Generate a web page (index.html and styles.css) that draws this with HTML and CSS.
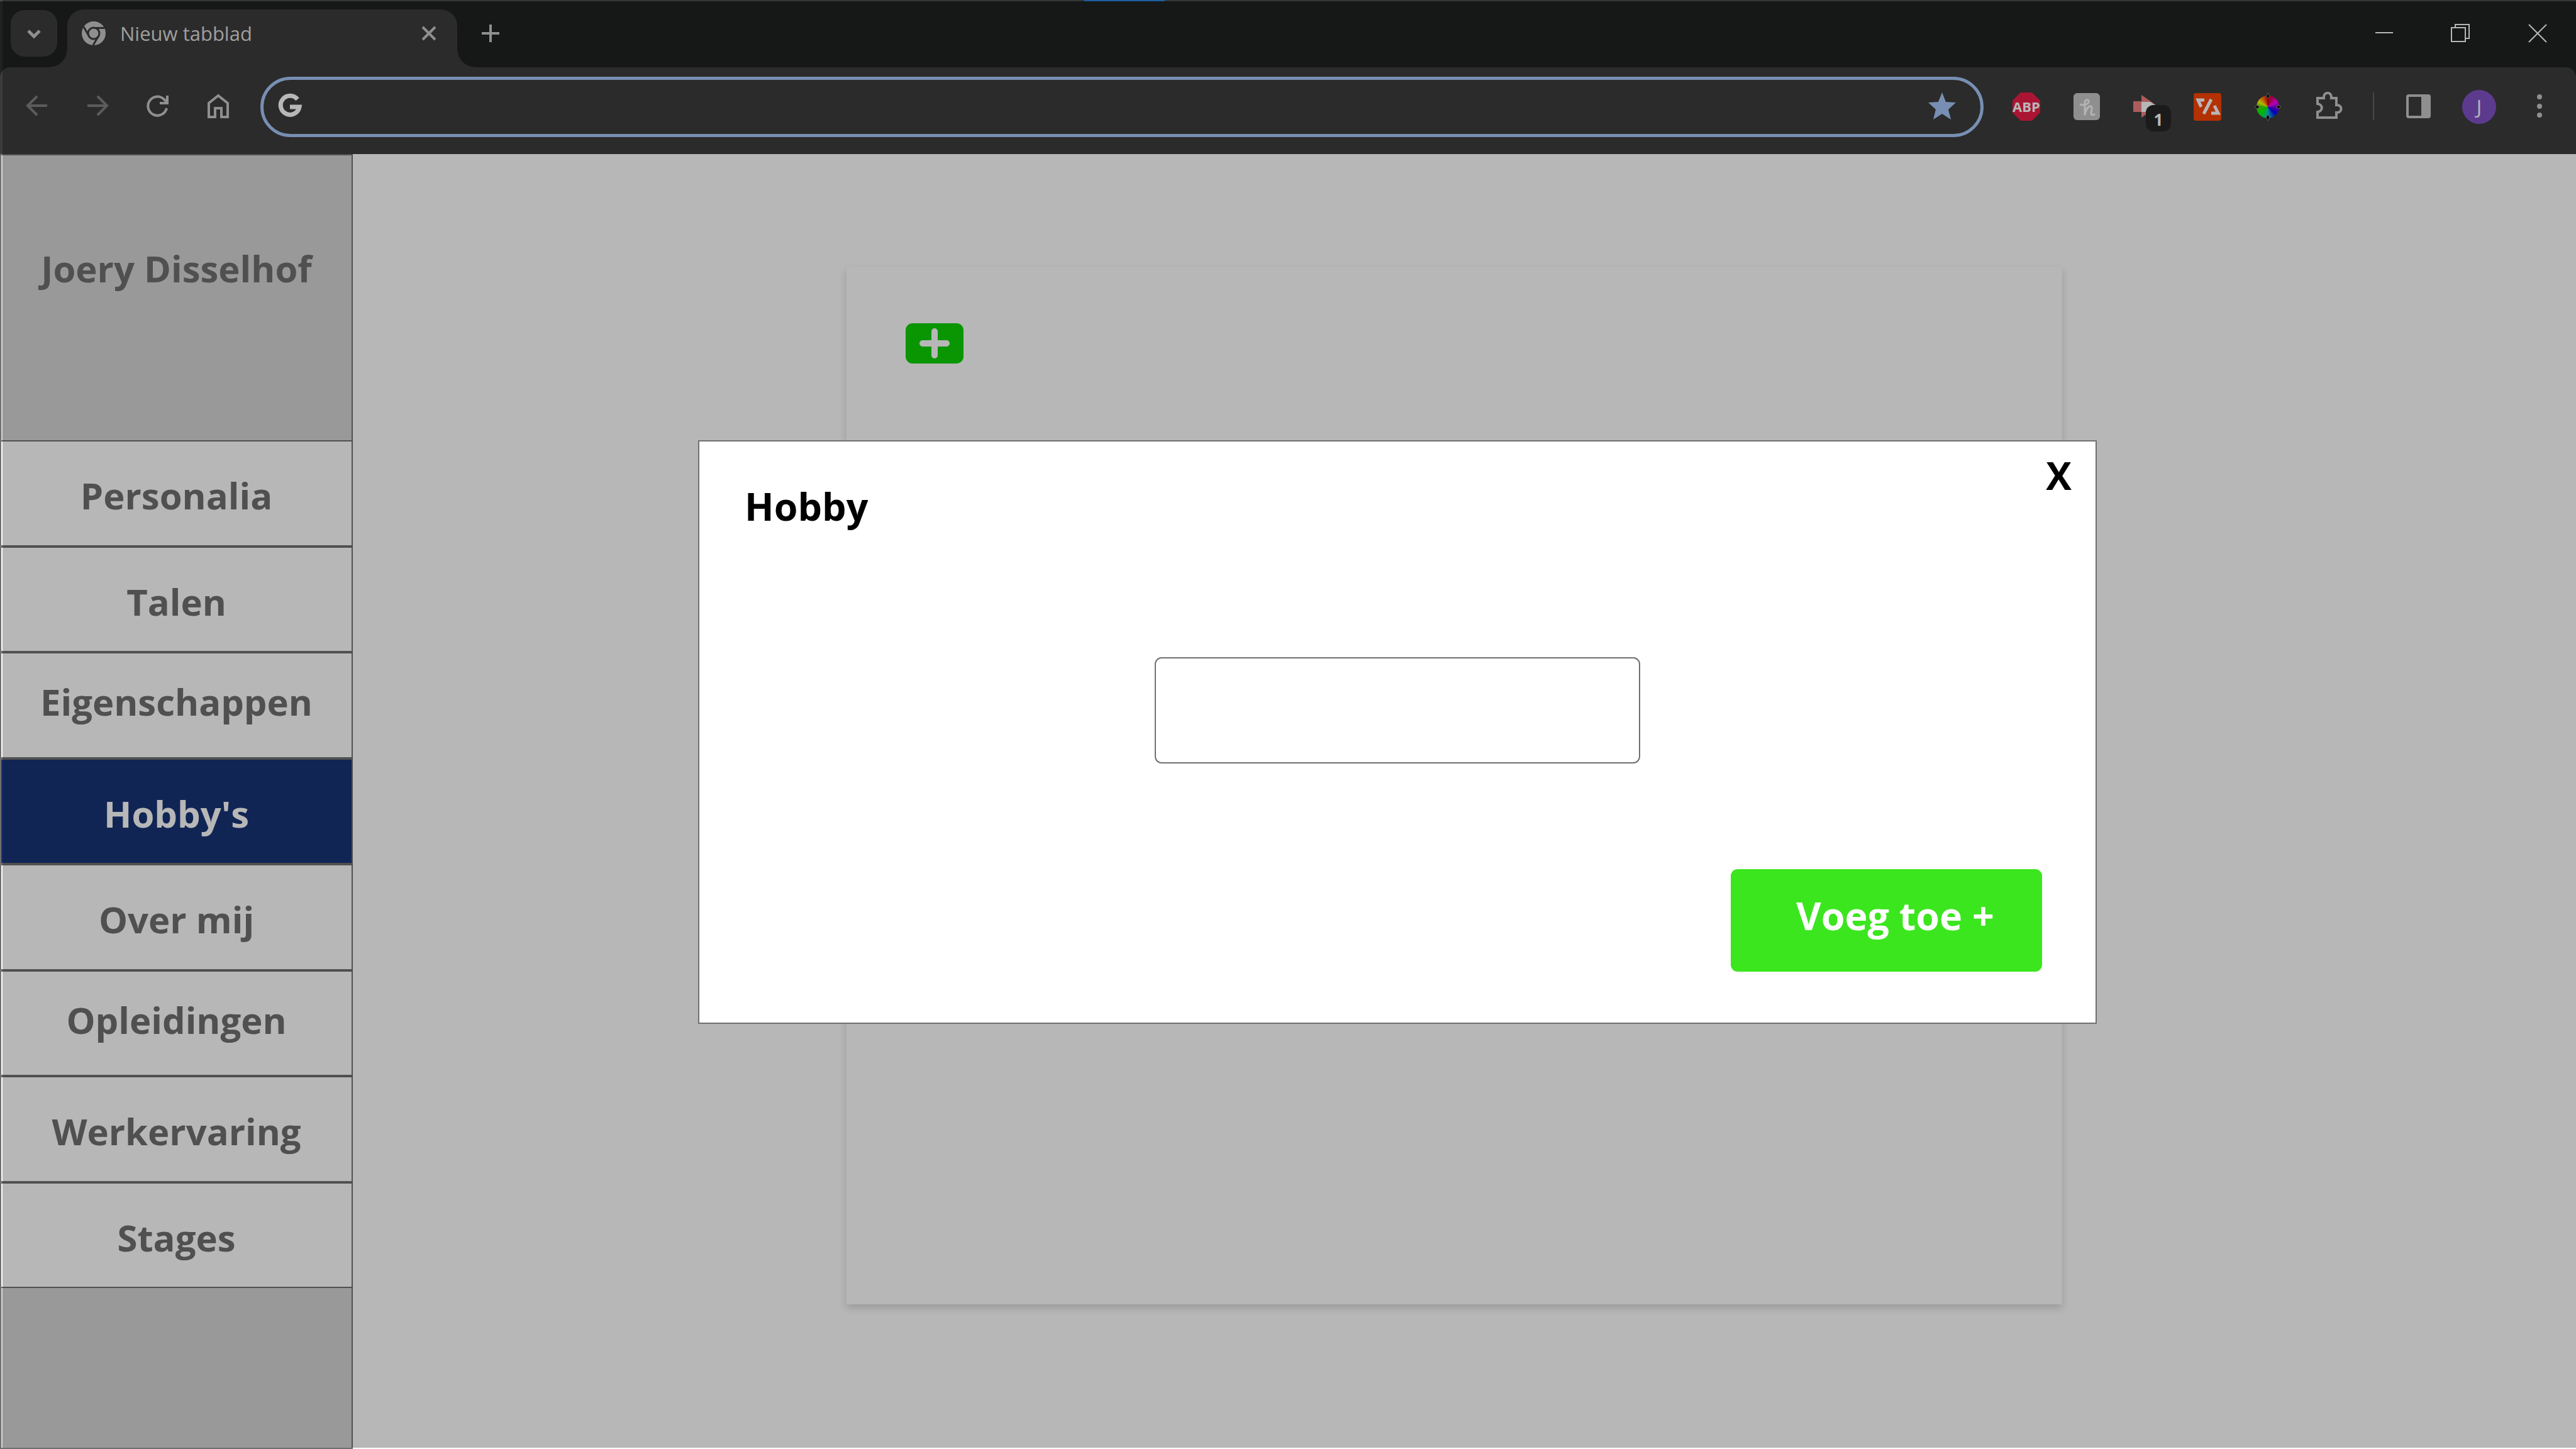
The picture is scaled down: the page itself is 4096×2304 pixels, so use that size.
FILE: index.html
```html
<!DOCTYPE html>
<html lang="nl">
<head>
<meta charset="utf-8">
<title>Hobby's - Joery Disselhof</title>
<link rel="stylesheet" href="styles.css">
</head>
<body>
<header class="browser">
  <div class="titlebar">
    <button class="tab-search" aria-label="Tabbladen zoeken">
      <svg class="icon" viewBox="0 0 48 48"><path d="M15 20l9 9 9-9" stroke-width="5"/></svg>
    </button>
    <div class="tab">
      <svg class="icon tab-logo" viewBox="0 0 40 40">
        <circle cx="20" cy="20" r="19" class="solid"/>
        <path d="M20 11.500H37M27.500 24.500L19 39M12.500 24.500L4 9.500" class="cut" stroke-width="3"/>
        <circle cx="20" cy="20" r="9" class="cut" stroke-width="3"/>
      </svg>
      <span class="tab-title">Nieuw tabblad</span>
      <button class="tab-close" aria-label="Tabblad sluiten">
        <svg class="icon" viewBox="0 0 48 48"><path d="M14 14l20 20M34 14L14 34" stroke-width="4"/></svg>
      </button>
    </div>
    <button class="new-tab" aria-label="Nieuw tabblad openen">
      <svg class="icon" viewBox="0 0 48 48"><path d="M24 10v28M10 24h28" stroke-width="4"/></svg>
    </button>
    <span class="snap-bar"></span>
    <div class="window-buttons">
      <button class="window-button" aria-label="Minimaliseren"><svg class="icon" viewBox="0 0 48 48"><path d="M10 23h28" stroke-width="2"/></svg></button>
      <button class="window-button" aria-label="Herstellen"><svg class="icon" viewBox="0 0 48 48"><path d="M9 15h22v22H9zM15 15V10h22v22h-6" stroke-width="2"/></svg></button>
      <button class="window-button" aria-label="Sluiten"><svg class="icon" viewBox="0 0 48 48"><path d="M10 10l28 28M38 10L10 38" stroke-width="2"/></svg></button>
    </div>
  </div>
  <div class="toolbar">
    <button class="tool tool--off" aria-label="Terug"><svg class="icon" viewBox="0 0 48 48"><path d="M40 22H10M24 7L9 22l15 15" stroke-width="4"/></svg></button>
    <button class="tool tool--off" aria-label="Vooruit"><svg class="icon" viewBox="0 0 48 48"><path d="M8 22h30M24 7l15 15-15 15" stroke-width="4"/></svg></button>
    <button class="tool" aria-label="Vernieuwen"><svg class="icon" viewBox="0 0 48 48"><path d="M38 26a15 15 0 1 1-4-14l5 5M39 6v12H27" stroke-width="4"/></svg></button>
    <button class="tool" aria-label="Startpagina"><svg class="icon" viewBox="0 0 48 48"><path d="M9 40V18L24 6l15 12v22H29V26H19v14z" stroke-width="4"/></svg></button>
    <div class="omnibox">
      <svg class="icon google" viewBox="0 0 48 48"><path d="M36 12a15 15 0 1 0 3 12H24" stroke-width="7"/></svg>
      <input class="address" type="text" aria-label="Adresbalk">
      <button class="bookmark" aria-label="Bladwijzer"><svg class="icon" viewBox="0 0 48 48"><path d="M24 1l6 15 16 1-12 11 4 16-14-9-14 9 4-16L2 17l16-1z" class="star"/></svg></button>
    </div>
    <div class="extensions">
      <button class="tool" aria-label="Adblock Plus"><svg class="icon" viewBox="0 0 48 48"><path d="M15 1h18l13 13v19L33 46H15L2 33V14z" fill="#f01c48" stroke="none"/><text x="24" y="32" class="abp">ABP</text></svg></button>
      <button class="tool" aria-label="Honey"><svg class="icon" viewBox="0 0 48 48"><rect x="3" y="2" width="42" height="43" rx="6" class="solid"/><path d="M13 20c7 2 16-1 14-6-1-2-6-2-6 3v20c1-9 6-15 10-14 3 1 0 7 0 11 0 3 3 4 6 1" stroke="#fafafa" stroke-width="3"/></svg></button>
      <button class="tool tool--badged" aria-label="Doorsturen, 1 melding"><svg class="icon" viewBox="0 0 48 48"><path d="M2 15h13V5l26 18-26 18V32H2z" fill="#f08080" stroke="none"/><path d="M15 16h14l9 6v10H15z" fill="#fff" stroke="none"/></svg><span class="badge">1</span></button>
      <button class="tool" aria-label="Omleiding"><svg class="icon" viewBox="0 0 48 48"><rect x="2" y="2" width="44" height="44" rx="4" fill="#fb4505" stroke="none"/><path d="M14 24L9 13h10M30 12L18 35M35 22l6 12H30" stroke="#fff" stroke-width="5"/></svg></button>
      <button class="tool tool--wheel" aria-label="Kleurkiezer"><span class="wheel"></span><svg class="icon" viewBox="0 0 48 48"><path d="M24 2l3 5-3 4-3-4zM24 36l3 5-3 5-3-5zM3 24l4-3 4 3-4 3zM37 24l4-3 4 3-4 3z" fill="#111" stroke="#8a8a8a" stroke-width="1"/></svg></button>
      <button class="tool" aria-label="Extensies"><svg class="icon" viewBox="0 0 48 48"><path d="M7 10h10c-1-11 13-11 12 0h8v11c10-1 10 13 0 12v8H7V32c9-1 9-12 0-13z" stroke-width="4"/></svg></button>
    </div>
    <span class="divider"></span>
    <button class="tool" aria-label="Zijpaneel"><svg class="icon" viewBox="0 0 48 48"><rect x="6" y="6" width="35" height="34" rx="2" stroke-width="4"/><path d="M28 6h13v34H28z" class="solid"/></svg></button>
    <button class="tool" aria-label="Profiel J"><span class="avatar">J</span></button>
    <button class="tool" aria-label="Menu"><svg class="icon" viewBox="0 0 48 48"><g class="solid"><circle cx="24" cy="8" r="4"/><circle cx="24" cy="23" r="4"/><circle cx="24" cy="37" r="4"/></g></svg></button>
  </div>
</header>

<div class="page">
  <aside class="sidebar">
    <p class="name">Joery Disselhof</p>
    <nav class="menu">
      <a class="menu-link" href="#personalia">Personalia</a>
      <a class="menu-link" href="#talen">Talen</a>
      <a class="menu-link menu-link--raised" href="#eigenschappen">Eigenschappen</a>
      <a class="menu-link menu-link--active" href="#hobbys">Hobby's</a>
      <a class="menu-link" href="#over-mij">Over mij</a>
      <a class="menu-link menu-link--raised" href="#opleidingen">Opleidingen</a>
      <a class="menu-link" href="#werkervaring">Werkervaring</a>
      <a class="menu-link" href="#stages">Stages</a>
    </nav>
  </aside>
  <main class="content">
    <section class="card">
      <button class="add" aria-label="Hobby toevoegen">
        <svg class="add-icon" viewBox="0 0 48 48"><path d="M24 5v38M5 24h38"/></svg>
      </button>
    </section>
  </main>
</div>

<div class="backdrop"></div>
<form class="dialog" role="dialog" aria-labelledby="hobby-title">
  <div class="dialog-head">
    <h1 class="dialog-title" id="hobby-title"><label for="hobby">Hobby</label></h1>
    <button class="dialog-close" type="button">X</button>
  </div>
  <input class="dialog-input" id="hobby" type="text">
  <button class="submit" type="button">Voeg toe +</button>
</form>
</body>
</html>
```
FILE: styles.css
```css
:root {
  --line: #707070;
  --icon: #c8c8c8;
  --focus: #a8c7fa;
  --frame: #1f2221;
  --toolbar: #3c3c3c;
}

* {
  box-sizing: border-box;
}

body {
  margin: 0;
  min-height: 100vh;
  display: flex;
  flex-direction: column;
  background: #fff;
  font: bold 58px/88px "Segoe UI", "Open Sans", "Noto Sans", sans-serif;
}

button,
input {
  font: inherit;
  margin: 0;
  padding: 0;
  border: 0;
  background: none;
}

button {
  display: grid;
  place-items: center;
}

/* Browser frame */

.browser {
  background: var(--frame);
  color: #dedede;
  font-size: 31px;
  font-weight: 400;
  line-height: 40px;
}

.icon {
  display: block;
  width: 48px;
  height: 48px;
  fill: none;
  stroke: var(--icon);
}

.solid {
  fill: var(--icon);
  stroke: none;
}

.titlebar {
  position: relative;
  display: flex;
  height: 107px;
  padding-left: 17px;
  border-top: 2px solid #4a4c4b;
}

.tab-search {
  width: 74px;
  height: 74px;
  margin-top: 14px;
  border-radius: 22px;
  background: var(--toolbar);
}

.tab {
  position: relative;
  display: flex;
  align-items: center;
  width: 620px;
  margin: 13px 0 0 16px;
  padding: 0 21px 16px 22px;
  border-radius: 26px 26px 0 0;
  background: var(--toolbar);
}

.tab::before,
.tab::after {
  content: "";
  position: absolute;
  bottom: 0;
  width: 28px;
  height: 28px;
}

.tab::before {
  right: 100%;
  background: radial-gradient(circle at 0 0, transparent 27px, var(--toolbar) 28px);
}

.tab::after {
  left: 100%;
  background: radial-gradient(circle at 100% 0, transparent 27px, var(--toolbar) 28px);
}

.tab-logo {
  width: 40px;
  height: 40px;
}

.cut {
  stroke: var(--toolbar);
}

.tab-title {
  flex: 1;
  padding-left: 22px;
}

.new-tab {
  width: 74px;
  height: 102px;
  margin-left: 16px;
}

.snap-bar {
  position: absolute;
  top: -2px;
  left: 1724px;
  width: 128px;
  height: 2px;
  background: #2a85e2;
}

.window-buttons {
  display: flex;
  margin-left: auto;
}

.window-button {
  width: 122px;
  height: 102px;
}

.window-button .icon {
  stroke: #fff;
}

.toolbar {
  display: flex;
  padding: 15px 10px 27px 11px;
  border-radius: 16px 16px 0 0;
  background: var(--toolbar);
}

.tool {
  width: 96px;
  height: 96px;
}

.tool--off .icon {
  stroke: #808080;
}

.omnibox {
  flex: 1;
  display: flex;
  align-items: center;
  height: 96px;
  margin: 0 20px 0 19px;
  padding: 0 37px 0 18px;
  border: 5px solid var(--focus);
  border-radius: 48px;
}

.google {
  stroke: #fff;
}

.address {
  flex: 1;
  height: 80px;
  padding: 0 16px;
  color: #fff;
  outline: 0;
}

.star {
  fill: var(--focus);
  stroke: none;
}

.extensions {
  display: flex;
}

.abp {
  fill: #fff;
  stroke: none;
  font-size: 22px;
  font-weight: bold;
  text-anchor: middle;
}

.tool--badged {
  position: relative;
}

.badge {
  position: absolute;
  left: 46px;
  top: 45px;
  width: 40px;
  height: 42px;
  border-radius: 12px;
  background: #262626;
  color: #fff;
  font-size: 26px;
  font-weight: bold;
  line-height: 46px;
}

.wheel,
.tool--wheel .icon {
  grid-area: 1 / 1;
}

.wheel {
  width: 36px;
  height: 36px;
  border-radius: 50%;
  background: conic-gradient(#c00, #f0f 60deg, #80d 90deg, #00f 130deg, #0cc 180deg, #0f0 230deg, #4d0 270deg, #ff0 300deg, #f60 335deg, #c00);
}

.divider {
  width: 2px;
  height: 44px;
  margin: 25px 23px;
  background: #646464;
}

.avatar {
  width: 54px;
  height: 54px;
  border-radius: 50%;
  background: #8053c8;
  color: #fff;
  line-height: 52px;
}

/* CV page */

.page {
  flex: 1;
  display: flex;
}

.sidebar {
  width: 561px;
  border: 2px solid var(--line);
  background: #d6d6d6;
  color: var(--line);
  text-align: center;
}

.name {
  margin: 0;
  padding: 136px 0 229px;
}

.menu {
  display: grid;
  grid-auto-rows: 1fr;
  min-height: 1348px;
  margin: 0 -2px;
}

.menu-link {
  display: grid;
  align-content: center;
  padding-top: 8px;
  border: 2px solid var(--line);
  background: #fff;
  color: inherit;
  text-decoration: none;
}

.menu-link--raised {
  padding: 0 0 10px;
}

.menu-link--active {
  background: #193477;
  color: #fff;
}

.content {
  flex: 1;
  display: flex;
  padding: 179px 817px 230px 785px;
}

.card {
  flex: 1;
  padding: 90px 94px;
  background: #fff;
  box-shadow: 0 6px 12px rgba(0, 0, 0, 0.16);
}

.add {
  width: 92px;
  height: 64px;
  border-radius: 11px;
  background: #0dd204;
}

.add-icon {
  width: 48px;
  height: 48px;
  stroke: #fff;
  stroke-width: 10px;
  stroke-linecap: round;
}

/* Dialog */

.backdrop {
  position: fixed;
  inset: 0 0 2px 4px;
  background: rgba(0, 0, 0, 0.282);
}

.dialog {
  position: absolute;
  top: 700px;
  left: 1110px;
  right: 762px;
  display: flex;
  flex-direction: column;
  padding: 10px 72px 81px;
  border: 2px solid var(--line);
  background: #fff;
  color: #000;
  font-size: 61px;
}

.dialog-head {
  display: flex;
  justify-content: space-between;
  align-items: flex-start;
  margin-right: -34px;
}

.dialog-title {
  margin: 0;
  padding-top: 49px;
  font: inherit;
}

.dialog-input {
  align-self: center;
  width: 772px;
  height: 169px;
  margin: 196px 0 168px;
  padding: 0 32px;
  border: 2px solid var(--line);
  border-radius: 11px;
}

.submit {
  align-self: flex-end;
  width: 495px;
  height: 163px;
  margin-right: 13px;
  padding: 0 0 16px 28px;
  border-radius: 11px;
  background: #3be61e;
  color: #fff;
}
```
